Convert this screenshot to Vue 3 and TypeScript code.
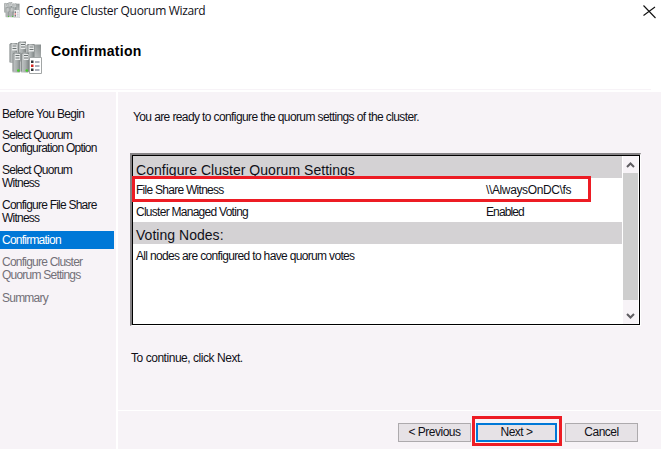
<script setup lang="ts">
interface Step { lines: string[]; state: 'done' | 'current' | 'pending' }

const steps: Step[] = [
  { lines: ['Before You Begin'], state: 'done' },
  { lines: ['Select Quorum', 'Configuration Option'], state: 'done' },
  { lines: ['Select Quorum', 'Witness'], state: 'done' },
  { lines: ['Configure File Share', 'Witness'], state: 'done' },
  { lines: ['Confirmation'], state: 'current' },
  { lines: ['Configure Cluster', 'Quorum Settings'], state: 'pending' },
  { lines: ['Summary'], state: 'pending' },
]

const towers = [
  { x: 0.5, y: 2 }, { x: 9, y: 0.5 }, { x: 17.5, y: 3 }, { x: 3.5, y: 11.5 }, { x: 12, y: 11.5 },
]
</script>

<template>
  <div class="window">
    <svg width="0" height="0" class="defs" aria-hidden="true">
      <defs>
        <linearGradient id="metal" x1="0" x2="1" y1="0" y2="0">
          <stop offset="0" stop-color="#c4c8c8" />
          <stop offset="0.55" stop-color="#a9aeae" />
          <stop offset="1" stop-color="#7c8282" />
        </linearGradient>
        <linearGradient id="shade" x1="0" x2="1" y1="1" y2="0">
          <stop offset="0" stop-color="#d8dada" />
          <stop offset="1" stop-color="#858b8b" />
        </linearGradient>
        <symbol id="cluster" viewBox="0 0 33 33">
          <path d="M23 3.500h9v17h-9z" fill="url(#shade)" />
          <g v-for="(t, i) in towers" :key="i" :transform="`translate(${t.x} ${t.y})`">
            <path d="M0 1l2-1h6v19l-1 1H0z" fill="url(#metal)" />
            <path d="M2.500 1.500h5v6h-5z" fill="#e9ebeb" />
            <path d="M3 3h4M3 5.500h4" stroke="#6c7373" stroke-width="1" />
            <path d="M0.500 19V1l2-0.500" fill="none" stroke="#7c8282" stroke-width="0.8" />
          </g>
          <circle cx="9.300" cy="29.500" r="1.300" fill="#45cf28" />
          <circle cx="17.800" cy="29.500" r="1.300" fill="#45cf28" />
          <path d="M20.500 16.500h12v16h-12z" fill="#fff" stroke="#a2a6a6" />
          <path d="M22 19.500h2.500v2.500h-2.500zM22 27.500h2.500v2.500h-2.500z" fill="#303438" />
          <path d="M22 23.500h2.500v2.500h-2.500z" fill="#d32420" />
          <path d="M26 21h4.500M26 25h4.500M26 29h4.500" stroke="#5b6078" />
        </symbol>
      </defs>
    </svg>

    <header class="header">
      <div class="titlebar">
        <svg class="icon-small"><use href="#cluster" /></svg>
        <span class="title">Configure Cluster Quorum Wizard</span>
        <svg class="close" viewBox="0 0 13 14"><path d="M0.500 0.500l12 12.500M12 2L0.500 10.500" /></svg>
      </div>
      <div class="banner">
        <svg class="icon-large"><use href="#cluster" /></svg>
        <h1>Confirmation</h1>
      </div>
    </header>

    <div class="body">
      <nav class="steps">
        <div v-for="(s, i) in steps" :key="i" class="step" :class="s.state">
          <div v-for="l in s.lines" :key="l">{{ l }}</div>
        </div>
      </nav>
      <main class="main">
        <p class="intro">You are ready to configure the quorum settings of the cluster.</p>
        <section class="report">
          <div class="report-content">
            <h2 class="first">Configure Cluster Quorum Settings</h2>
            <div class="row"><span class="name">File Share Witness</span><span class="path">\\AlwaysOnDC\fs</span></div>
            <div class="row"><span class="name">Cluster Managed Voting</span><span class="value">Enabled</span></div>
            <h2>Voting Nodes:</h2>
            <div class="row"><span>All nodes are configured to have quorum votes</span></div>
            <div class="highlight"></div>
          </div>
          <div class="scrollbar">
            <svg viewBox="0 0 15 17"><path d="M4 11L7.500 7.500L11 11" /></svg>
            <div class="thumb"></div>
            <svg class="down" viewBox="0 0 15 17"><path d="M4 7L7.500 10.500L11 7" /></svg>
          </div>
        </section>
        <p class="hint">To continue, click Next.</p>
        <footer class="footer">
          <button>&lt; Previous</button>
          <div class="next-mark"><button class="primary">Next &gt;</button></div>
          <button>Cancel</button>
        </footer>
      </main>
    </div>
  </div>
</template>

<style>
body { margin: 0; overflow: hidden; }
</style>

<style scoped>
* { box-sizing: border-box; }
.window { width: 661px; height: 449px; background: #f7f3f7; color: #101018; font: 12px/13px "Liberation Sans", Arial, sans-serif; letter-spacing: -0.44px; display: flex; flex-direction: column; white-space: nowrap; }
.defs { position: absolute; }
.header { height: 92px; background: linear-gradient(#f7f3f7, #f7f3f7) 0 89px / 651px 1px no-repeat #fff; flex: none; }
.titlebar { display: flex; height: 30px; padding: 2px 5px 0 4px; }
.icon-small { width: 16px; height: 16px; }
.title { font: 12px/18px "Open Sans", "Noto Sans", sans-serif; letter-spacing: -0.33px; margin-left: 6px; }
.close { width: 13px; height: 14px; margin: 3px 0 0 auto; fill: none; stroke: #111; stroke-width: 1.1; }
.banner { display: flex; padding: 11px 0 0 9px; }
.icon-large { width: 33px; height: 33px; }
h1 { margin: 2px 0 0 9px; font-size: 14px; line-height: 16px; letter-spacing: 0.3px; color: #000; }
.body { flex: 1; display: flex; }
.steps { width: 118px; border-right: 2px solid #fff; padding-top: 16px; letter-spacing: -0.77px; }
.step { margin-bottom: 9px; padding-left: 2px; }
.step:first-child { margin-bottom: 8px; letter-spacing: -0.65px; }
.step.current { width: 114px; height: 18px; line-height: 19px; background: #0078d7; color: #fff; margin: -3px 0 7px; }
.step.pending { color: #737078; margin-bottom: 10px; }
.main { flex: 1; display: flex; flex-direction: column; }
p { margin: 0; }
.intro { padding: 19px 0 0 15px; height: 61px; letter-spacing: -0.61px; }
.report { width: 511px; height: 173px; margin-left: 12px; border: solid #868386; border-width: 2px 1px 1px 2px; border-right-color: #fff; border-bottom-color: #fff; box-shadow: inset 0 0 0 1px #000; background: #fff; padding: 1px 2px 1px 1px; display: flex; }
.report-content { width: 489px; position: relative; }
h2 { margin: 0; height: 22px; padding: 4px 0 0 3px; font-size: 14px; line-height: 18px; font-weight: 400; letter-spacing: 0.03px; background: #d4d2d4; }
h2.first { padding-top: 5px; }
.row { display: flex; height: 22px; padding-left: 3px; line-height: 25px; letter-spacing: -0.66px; }
.name { width: 350px; letter-spacing: -0.73px; }
.path { letter-spacing: -0.37px; }
.value { letter-spacing: -0.9px; }
.highlight { position: absolute; left: -1px; top: 20px; width: 459px; height: 26px; border: 3px solid #ed1c24; }
.scrollbar { width: 15px; margin-left: 1px; background: #f7f3f7; display: flex; flex-direction: column; }
.scrollbar svg { width: 15px; height: 17px; flex: none; fill: none; stroke: #5f5d62; stroke-width: 2; }
.scrollbar .down { margin-top: auto; }
.thumb { height: 127px; background: #cecece; }
.hint { margin: 26px 0 0 13px; letter-spacing: -0.46px; }
.footer { margin-top: auto; height: 39px; border-top: 1px solid #fff; display: flex; padding: 5px 0 0 280px; }
button { width: 73px; height: 19px; margin: 7px 0 0; padding: 0; background: #e6e2e6; border: 1px solid #adaaad; font: inherit; letter-spacing: -0.5px; color: inherit; }
.next-mark { width: 90px; height: 30px; border: 3px solid #ed1c24; margin: 0 3px 0 1px; padding: 4px 1px; }
.primary { width: 81px; border: 2px solid #0078d7; margin: 0; }
</style>
